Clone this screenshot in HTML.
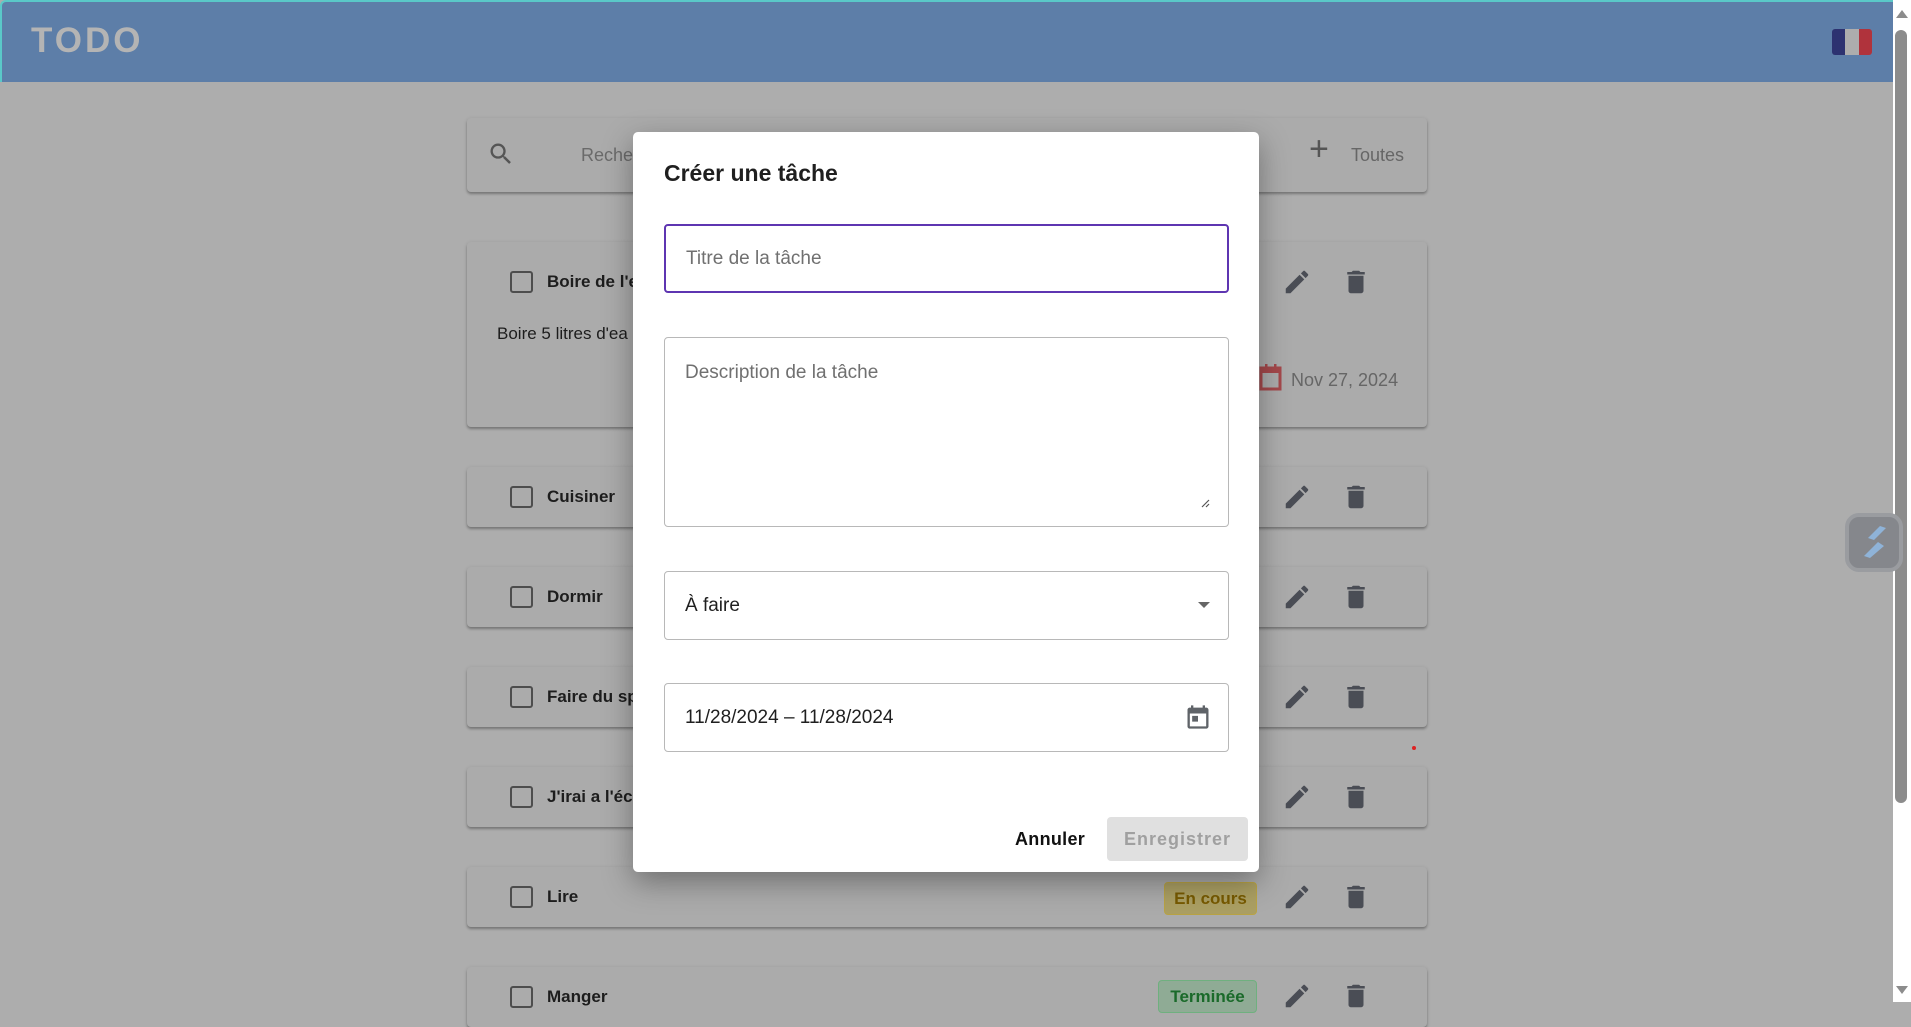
<!DOCTYPE html>
<html><head><meta charset="utf-8"><style>
*{box-sizing:border-box;margin:0;padding:0}
body{width:1911px;height:1002px;overflow:hidden;background:#adadad;font-family:"Liberation Sans",Arial,sans-serif;position:relative}
.abs{position:absolute}
.hdr{left:0;top:0;width:1893px;height:82px;background:#5d7ea8;border-top:2px solid #5ac8c8;border-left:2px solid #5ac8c8;border-top-left-radius:6px}
.todo{left:31px;top:21px;font-size:35px;font-weight:bold;color:#b4b4b4;letter-spacing:3px}
.card{background:#ababab;border-radius:4px;box-shadow:0 2px 2px rgba(0,0,0,.25),0 1px 4px rgba(0,0,0,.12);left:467px;width:960px}
.cb{width:23px;height:22px;border:2.5px solid #4d4d4d;border-radius:3px;left:43px}
.ttl{left:80px;font-size:17px;font-weight:bold;color:#1d1d1d}
.dlg{left:633px;top:132px;width:626px;height:740px;background:#fff;border-radius:5px;box-shadow:0 10px 30px rgba(0,0,0,.35)}
.fld{left:31px;width:565px;border:1.5px solid #b8b8b8;border-radius:4px}
.ph{font-size:19px;color:#707070;left:20px}
.sb{left:1893px;top:0;width:18px;height:1002px;background:#fff}
</style></head><body>
<div class="abs hdr"></div>
<div class="abs todo">TODO</div>
<div class="abs" style="left:1832px;top:29px;width:40px;height:26px;border-radius:3px;overflow:hidden;display:flex"><div style="flex:1;background:#2d3270"></div><div style="flex:1;background:#adadad"></div><div style="flex:1;background:#b0333c"></div></div>

<div class="abs card" style="top:118px;height:74px">
 <svg class="abs" style="left:20px;top:22px" width="28" height="28" viewBox="0 0 24 24"><path fill="#555" d="M15.5 14h-.79l-.28-.27A6.47 6.47 0 0 0 16 9.5 6.5 6.5 0 1 0 9.5 16c1.61 0 3.09-.59 4.23-1.57l.27.28v.79l5 4.99L20.49 19l-4.99-5zm-6 0C7.01 14 5 11.99 5 9.5S7.01 5 9.5 5 14 7.01 14 9.5 11.99 14 9.5 14z"/></svg>
 <div class="abs" style="left:114px;top:27px;font-size:18px;color:#6a6a6a">Recher</div>
 <div class="abs" style="left:842px;top:12px;font-size:34px;color:#555;font-weight:300">+</div>
 <div class="abs" style="left:884px;top:27px;font-size:18px;color:#666">Toutes</div>
</div>

<div class="abs card" style="top:242px;height:185px">
 <div class="abs cb" style="top:29px"></div>
 <div class="abs ttl" style="top:30px">Boire de l'e</div>
 <div class="abs" style="left:30px;top:82px;font-size:17px;color:#1d1d1d">Boire 5 litres d'ea</div>
 <svg class="abs" style="left:792px;top:120px" width="24" height="30" viewBox="0 0 24 30"><rect x="2" y="6" width="19" height="21" fill="none" stroke="#a4484b" stroke-width="3"/><rect x="2" y="6" width="19" height="5" fill="#a4484b"/><rect x="6" y="2" width="2.5" height="6" fill="#a4484b"/><rect x="15" y="2" width="2.5" height="6" fill="#a4484b"/></svg>
 <div class="abs" style="left:824px;top:128px;font-size:18px;color:#666">Nov 27, 2024</div>
</div>

<div class="abs card" style="top:467px;height:60px"><div class="abs cb" style="top:19px"></div><div class="abs ttl" style="top:20px">Cuisiner</div></div>
<div class="abs card" style="top:567px;height:60px"><div class="abs cb" style="top:19px"></div><div class="abs ttl" style="top:20px">Dormir</div></div>
<div class="abs card" style="top:667px;height:60px"><div class="abs cb" style="top:19px"></div><div class="abs ttl" style="top:20px">Faire du sp</div></div>
<div class="abs card" style="top:767px;height:60px"><div class="abs cb" style="top:19px"></div><div class="abs ttl" style="top:20px">J'irai a l'éc</div></div>
<div class="abs card" style="top:867px;height:60px"><div class="abs cb" style="top:19px"></div><div class="abs ttl" style="top:20px">Lire</div>
 <div class="abs" style="left:697px;top:15px;width:93px;height:33px;background:#ab9f63;border:1px solid #b9a344;border-radius:4px;color:#775a00;font-size:17px;font-weight:bold;text-align:center;line-height:31px">En cours</div></div>
<div class="abs card" style="top:967px;height:60px"><div class="abs cb" style="top:19px"></div><div class="abs ttl" style="top:20px">Manger</div>
 <div class="abs" style="left:691px;top:13px;width:99px;height:33px;background:#8fab95;border:1px solid #6fb07f;border-radius:4px;color:#1a6a2a;font-size:17px;font-weight:bold;text-align:center;line-height:31px">Terminée</div></div>

<svg width="0" height="0" style="position:absolute"><defs>
<g id="pen"><path fill="#4a4d55" d="M3 17.25V21h3.75L17.81 9.94l-3.75-3.75L3 17.25zM20.71 7.04a1 1 0 0 0 0-1.41l-2.34-2.34a1 1 0 0 0-1.41 0l-1.83 1.83 3.75 3.75 1.830-1.83z"/></g>
<g id="trash"><path fill="#4a4d55" d="M6 19c0 1.1.9 2 2 2h8c1.1 0 2-.9 2-2V7H6v12zM19 4h-3.5l-1-1h-5l-1 1H5v2h14V4z"/></g>
</defs></svg>
<svg class="abs" style="left:1282px;top:267px" width="30" height="30" viewBox="0 0 24 24"><use href="#pen"/></svg>
<svg class="abs" style="left:1341px;top:267px" width="30" height="30" viewBox="0 0 24 24"><use href="#trash"/></svg>
<svg class="abs" style="left:1282px;top:482px" width="30" height="30" viewBox="0 0 24 24"><use href="#pen"/></svg>
<svg class="abs" style="left:1341px;top:482px" width="30" height="30" viewBox="0 0 24 24"><use href="#trash"/></svg>
<svg class="abs" style="left:1282px;top:582px" width="30" height="30" viewBox="0 0 24 24"><use href="#pen"/></svg>
<svg class="abs" style="left:1341px;top:582px" width="30" height="30" viewBox="0 0 24 24"><use href="#trash"/></svg>
<svg class="abs" style="left:1282px;top:682px" width="30" height="30" viewBox="0 0 24 24"><use href="#pen"/></svg>
<svg class="abs" style="left:1341px;top:682px" width="30" height="30" viewBox="0 0 24 24"><use href="#trash"/></svg>
<svg class="abs" style="left:1282px;top:782px" width="30" height="30" viewBox="0 0 24 24"><use href="#pen"/></svg>
<svg class="abs" style="left:1341px;top:782px" width="30" height="30" viewBox="0 0 24 24"><use href="#trash"/></svg>
<svg class="abs" style="left:1282px;top:882px" width="30" height="30" viewBox="0 0 24 24"><use href="#pen"/></svg>
<svg class="abs" style="left:1341px;top:882px" width="30" height="30" viewBox="0 0 24 24"><use href="#trash"/></svg>
<svg class="abs" style="left:1282px;top:981px" width="30" height="30" viewBox="0 0 24 24"><use href="#pen"/></svg>
<svg class="abs" style="left:1341px;top:981px" width="30" height="30" viewBox="0 0 24 24"><use href="#trash"/></svg>

<div class="abs" style="left:1412px;top:746px;width:4px;height:4px;border-radius:50%;background:#d22"></div>

<div class="abs sb"></div>
<div class="abs" style="left:1895px;top:30px;width:12px;height:773px;background:#8c8c8c;border-radius:6px"></div>
<div class="abs" style="left:1896px;top:10px;width:0;height:0;border-left:6px solid transparent;border-right:6px solid transparent;border-bottom:8px solid #8c8c8c"></div>
<div class="abs" style="left:1896px;top:986px;width:0;height:0;border-left:6px solid transparent;border-right:6px solid transparent;border-top:8px solid #8c8c8c"></div>

<div class="abs" style="left:1845px;top:513px;width:58px;height:59px;border-radius:14px;background:#85878c;border:4px solid #9a9ca0"></div>
<svg class="abs" style="left:1860px;top:524px" width="30" height="36" viewBox="0 0 30 36"><path d="M8 14 L20 2 L26 4 L14 16 Z" fill="#8fb3d8"/><path d="M4 32 L18 18 L24 22 L10 34 Z" fill="#8fb3d8"/></svg>

<div class="abs dlg">
 <div class="abs" style="left:31px;top:28px;font-size:23px;font-weight:bold;color:#1f1f1f">Créer une tâche</div>
 <div class="abs fld" style="top:92px;height:69px;border:2px solid #5e35b1"><div class="abs ph" style="top:22px">Titre de la tâche</div></div>
 <div class="abs fld" style="top:205px;height:190px"><div class="abs ph" style="top:24px">Description de la tâche</div>
  <svg class="abs" style="right:18px;bottom:18px" width="10" height="10" viewBox="0 0 10 10"><path d="M9 2 L2 9 M9 6 L6 9" stroke="#555" stroke-width="1.2"/></svg></div>
 <div class="abs fld" style="top:439px;height:69px"><div class="abs" style="left:20px;top:23px;font-size:19px;color:#1f1f1f">À faire</div>
  <div class="abs" style="right:18px;top:30px;width:0;height:0;border-left:6px solid transparent;border-right:6px solid transparent;border-top:6px solid #666"></div></div>
 <div class="abs fld" style="top:551px;height:69px"><div class="abs" style="left:20px;top:23px;font-size:19px;color:#1f1f1f">11/28/2024 – 11/28/2024</div>
  <svg class="abs" style="left:519px;top:19px" width="28" height="28" viewBox="0 0 24 24"><path fill="#5f6368" d="M19 4h-1V2h-2v2H8V2H6v2H5c-1.1 0-2 .9-2 2v14c0 1.1.9 2 2 2h14c1.1 0 2-.9 2-2V6c0-1.1-.9-2-2-2zm0 16H5V9h14v11zM7 11h5v5H7z"/></svg></div>
 <div class="abs" style="left:382px;top:697px;font-size:18px;font-weight:bold;color:#111;letter-spacing:.3px">Annuler</div>
 <div class="abs" style="left:474px;top:685px;width:141px;height:44px;background:#e0e0e0;border-radius:4px;color:#a0a0a0;font-size:18px;font-weight:bold;text-align:center;line-height:44px;letter-spacing:1px">Enregistrer</div>
</div>
</body></html>
